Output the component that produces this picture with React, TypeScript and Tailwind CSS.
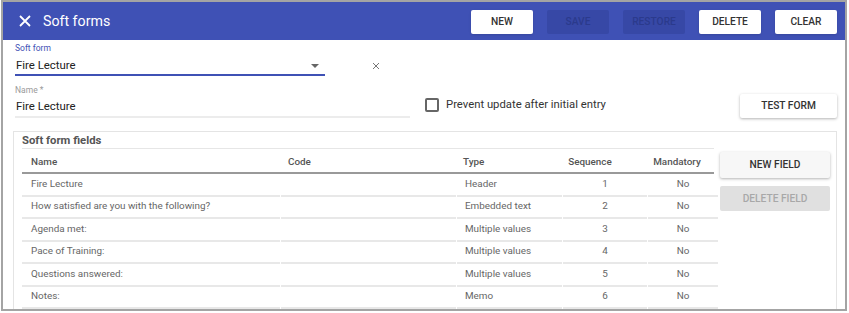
import React from "react";

const rows = [
  { name: "Fire Lecture", type: "Header", seq: 1 },
  { name: "How satisfied are you with the following?", type: "Embedded text", seq: 2 },
  { name: "Agenda met:", type: "Multiple values", seq: 3 },
  { name: "Pace of Training:", type: "Multiple values", seq: 4 },
  { name: "Questions answered:", type: "Multiple values", seq: 5 },
  { name: "Notes:", type: "Memo", seq: 6 },
];

const cols = "grid grid-cols-[258px_175px_105px_84px_70px]";

export default function App() {
  return (
    <div className="w-[849px] h-[313px] bg-white pl-[1px]" style={{ fontFamily: "Roboto, 'Liberation Sans', sans-serif" }}>
      <div className="w-[846px] h-[311px] border-2 border-[#a4a4a4] overflow-hidden flex flex-col">
        {/* Header */}
        <div className="h-[38px] shrink-0 bg-[#3f51b5] flex items-center pl-[16px] pr-[8px]">
          <svg width="12" height="12" viewBox="0 0 12 12" className="shrink-0">
            <path d="M1 1L11 11M11 1L1 11" stroke="white" strokeWidth="1.8" />
          </svg>
          <div className="ml-[12px] text-white text-[14.2px] leading-none">Soft forms</div>
          <div className="ml-auto flex items-center gap-[14px] mt-[2px]">
            <button className="w-[62px] h-[24px] bg-white rounded-[2px] text-[10.2px] font-medium text-[#333] shadow-sm">NEW</button>
            <button className="w-[62px] h-[24px] bg-[#3748a6] rounded-[2px] text-[10.2px] font-medium text-[#2b3a8c]">SAVE</button>
            <button className="w-[62px] h-[24px] bg-[#3748a6] rounded-[2px] text-[10.2px] font-medium text-[#2b3a8c]">RESTORE</button>
            <button className="w-[62px] h-[24px] bg-white rounded-[2px] text-[10.2px] font-medium text-[#333] shadow-sm">DELETE</button>
            <button className="w-[62px] h-[24px] bg-white rounded-[2px] text-[10.2px] font-medium text-[#333] shadow-sm">CLEAR</button>
          </div>
        </div>

        {/* Form */}
        <div className="pl-[12px] pt-[2px] flex flex-col">
          <div className="flex items-start">
            <div className="w-[310px]">
              <div className="h-[12px] text-[8.5px] leading-[12px] text-[#3f51b5]">Soft form</div>
              <div className="flex items-center h-[22px] pt-[3px] border-b-2 border-[#3f51b5]">
                <span className="text-[11.4px] text-[#222] pl-[1px]">Fire Lecture</span>
                <svg width="8" height="4" viewBox="0 0 8 4" className="ml-auto mr-[6px]">
                  <path d="M0 0H8L4 4Z" fill="#666" />
                </svg>
              </div>
            </div>
            <svg width="8" height="8" viewBox="0 0 8 8" className="ml-[47px] mt-[20px]">
              <path d="M1 1L7 7M7 1L1 7" stroke="#777" strokeWidth="1" />
            </svg>
          </div>

          <div className="flex items-start mt-[8px]">
            <div className="w-[395px]">
              <div className="h-[12px] text-[8.5px] leading-[12px] text-[#9a9a9a]">Name *</div>
              <div className="flex items-center h-[22px] pt-[1px] border-b-2 border-[#ececec]">
                <span className="text-[11.4px] text-[#222] pl-[1px]">Fire Lecture</span>
              </div>
            </div>
            <div className="flex items-center ml-[15px] mt-[13px]">
              <div className="w-[14px] h-[14px] border-2 border-[#666] rounded-[2px]" />
              <span className="ml-[7px] text-[11.3px] text-[#333]">Prevent update after initial entry</span>
            </div>
            <button className="ml-auto mr-[8px] mt-[10px] w-[97px] h-[24px] bg-white rounded-[2px] text-[10.2px] font-medium text-[#333] shadow-[0_1px_3px_rgba(0,0,0,0.3)]">TEST FORM</button>
          </div>
        </div>

        {/* Card */}
        <div className="ml-[10px] mt-[13px] w-[824px] border border-[#e4e4e4] flex pl-[8px] pr-[6px] gap-[6px] grow">
          <div className="w-[692px]">
            <div className="h-[17px] border-b border-[#e6e6e6] text-[11.3px] font-bold text-[#555] leading-[17px]">Soft form fields</div>
            <div className={`${cols} h-[25px] border-b-2 border-[#999] items-end pb-[2px] text-[9.9px] font-medium text-[#555]`}>
              <div className="pl-[9px]">Name</div>
              <div className="pl-[8px]">Code</div>
              <div className="pl-[8px]">Type</div>
              <div className="text-center pr-[24px]">Sequence</div>
              <div className="text-center pr-[4px]">Mandatory</div>
            </div>
            {rows.map((r) => (
              <div key={r.seq} className={`${cols} h-[22.5px] gap-x-[1px] text-[9.9px] text-[#666]`}>
                <div className="pl-[9px] border-b-2 border-[#e8e8e8] flex items-center">{r.name}</div>
                <div className="border-b-2 border-[#e8e8e8]" />
                <div className="pl-[8px] border-b-2 border-[#e8e8e8] flex items-center">{r.type}</div>
                <div className="border-b-2 border-[#e8e8e8] flex items-center justify-center">{r.seq}</div>
                <div className="border-b-2 border-[#e8e8e8] flex items-center justify-center">No</div>
              </div>
            ))}
          </div>
          <div className="w-[110px] pt-[20px] flex flex-col gap-[8px]">
            <button className="h-[26px] bg-[#f7f7f7] rounded-[2px] text-[10.2px] font-medium text-[#333] shadow-[0_1px_3px_rgba(0,0,0,0.3)]">NEW FIELD</button>
            <button className="h-[25px] bg-[#e0e0e0] rounded-[2px] text-[10.2px] font-medium text-[#a8a8a8]">DELETE FIELD</button>
          </div>
        </div>
      </div>
    </div>
  );
}
